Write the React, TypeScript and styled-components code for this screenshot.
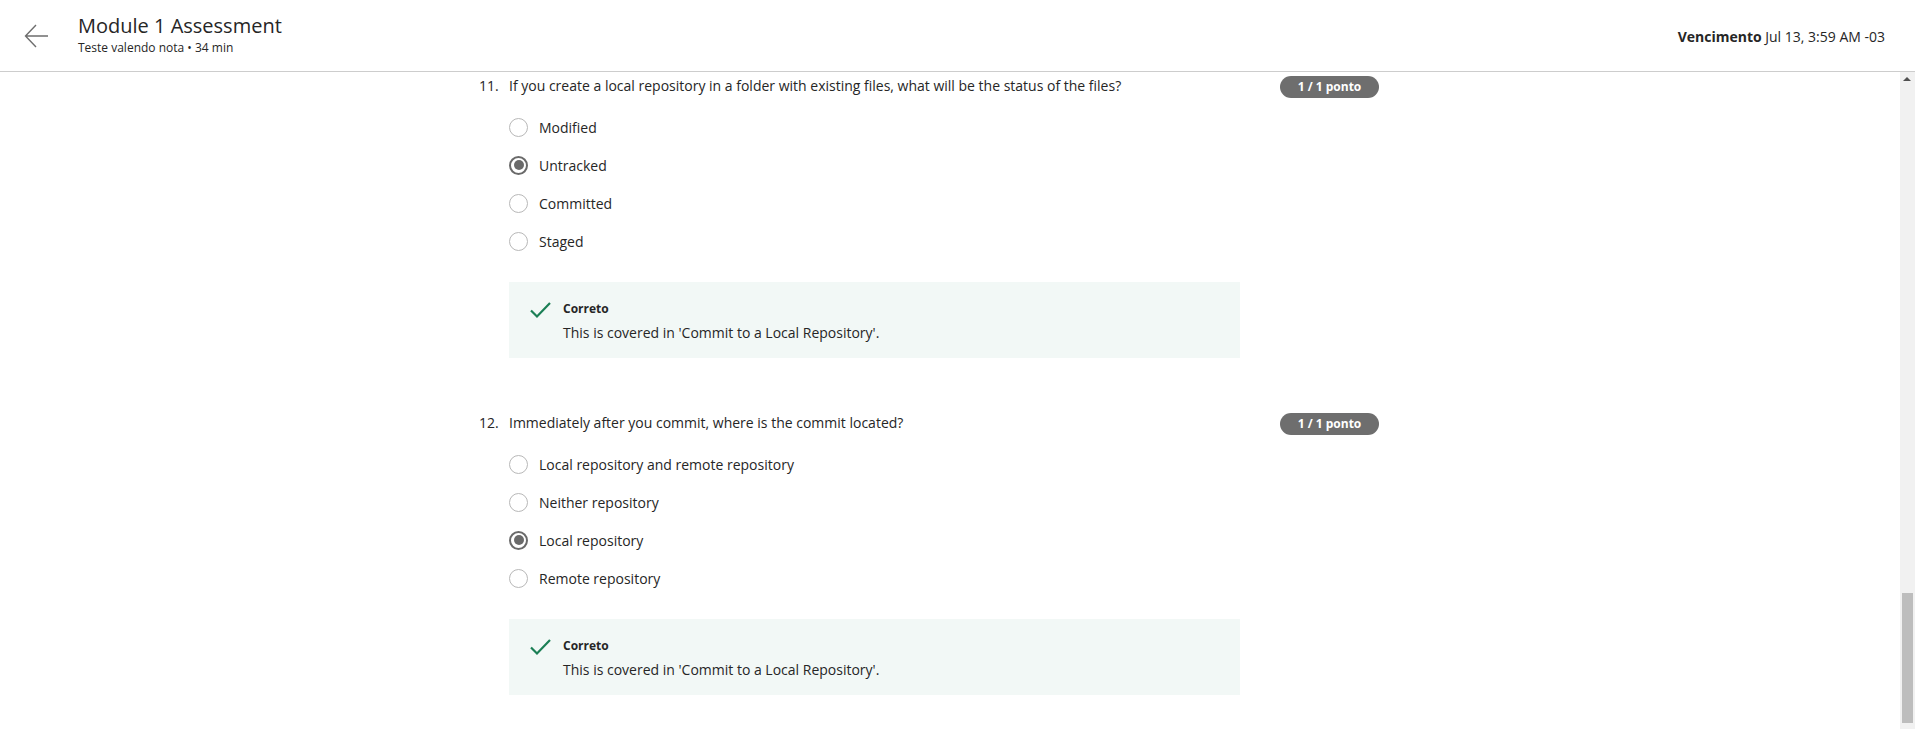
import React from "react";
import styled, { createGlobalStyle } from "styled-components";

const GlobalStyle = createGlobalStyle`
  html, body {
    margin: 0;
    padding: 0;
    background: #fff;
    overflow: hidden;
  }
  body {
    font-family: "Open Sans", "Noto Sans", sans-serif;
    color: #262626;
  }
`;

// page shell
const Page = styled.div`
  width: 1915px;
  height: 729px;
  display: flex;
  flex-direction: column;
  overflow: hidden;
`;

const Header = styled.header`
  height: 71px;
  flex-shrink: 0;
  display: flex;
  align-items: center;
  padding: 0 30px 0 24px;
  border-bottom: 1px solid #cdcdcd;
  box-sizing: content-box;
`;

const BackButton = styled.button`
  width: 26px;
  height: 26px;
  padding: 0;
  border: 0;
  background: none;
  display: flex;
  align-items: center;
  justify-content: center;
  cursor: pointer;
  margin-top: 1px;
`;

const TitleBlock = styled.div`
  margin-left: 28px;
  display: flex;
  flex-direction: column;
  margin-top: -3px;
`;

const Title = styled.h1`
  margin: 0;
  font-size: 20px;
  font-weight: 400;
  line-height: 26px;
  color: #262626;
`;

const Subtitle = styled.div`
  font-size: 12px;
  line-height: 17px;
  color: #262626;
`;

const DueDate = styled.div`
  margin-left: auto;
  font-size: 14px;
  color: #262626;
  margin-top: 1px;

  strong {
    font-weight: 700;
  }
`;

const Body = styled.div`
  flex: 1;
  display: flex;
  min-height: 0;
`;

const Content = styled.main`
  flex: 1;
  padding-left: 479px;
`;

const Column = styled.div`
  width: 900px;
`;

const Question = styled.section`
  margin-bottom: 51px;
`;

const QuestionRow = styled.div`
  display: flex;
  align-items: center;
  height: 26px;
`;

const QNumber = styled.span`
  width: 30px;
  font-size: 14px;
`;

const QText = styled.span`
  flex: 1;
  font-size: 14px;
`;

const Badge = styled.span`
  width: 99px;
  height: 22px;
  border-radius: 11px;
  background: #6e6e6e;
  color: #fff;
  font-size: 12px;
  font-weight: 700;
  display: flex;
  align-items: center;
  justify-content: center;
  margin-top: 3px;
`;

const Options = styled.ul`
  list-style: none;
  margin: 10px 0 0 30px;
  padding: 0;
`;

const Option = styled.li`
  display: flex;
  align-items: center;
  height: 38px;
  font-size: 14px;
`;

const Radio = styled.span<{ $checked?: boolean }>`
  width: 19px;
  height: 19px;
  box-sizing: border-box;
  border-radius: 50%;
  border: ${(p) => (p.$checked ? "2px solid #6a6a6a" : "1.5px solid #b8b8b8")};
  display: flex;
  align-items: center;
  justify-content: center;
  margin-right: 11px;

  &::after {
    content: "";
    display: ${(p) => (p.$checked ? "block" : "none")};
    width: 10px;
    height: 10px;
    border-radius: 50%;
    background: #6a6a6a;
  }
`;

const Feedback = styled.div`
  margin: 22px 0 0 30px;
  width: 731px;
  height: 76px;
  box-sizing: border-box;
  background: #f2f8f6;
  display: flex;
  padding: 18px 0 0 20px;
`;

const CheckIcon = styled.svg`
  width: 24px;
  height: 20px;
  flex-shrink: 0;
  margin-right: 10px;
`;

const FeedbackText = styled.div`
  display: flex;
  flex-direction: column;
`;

const FeedbackTitle = styled.div`
  font-size: 12px;
  font-weight: 700;
  line-height: 18px;
`;

const FeedbackBody = styled.div`
  font-size: 14px;
  line-height: 20px;
  margin-top: 5px;
`;

const Scrollbar = styled.div`
  width: 15px;
  background: #f1f1f1;
  position: relative;
  flex-shrink: 0;
`;

const ScrollArrow = styled.div`
  position: absolute;
  top: 5px;
  left: 3px;
  width: 0;
  height: 0;
  border-left: 4px solid transparent;
  border-right: 4px solid transparent;
  border-bottom: 4px solid #505050;
`;

const ScrollThumb = styled.div`
  position: absolute;
  left: 2px;
  right: 2px;
  top: 521px;
  height: 130px;
  background: #bdbdbd;
`;

type Q = {
  num: number;
  text: string;
  options: string[];
  selected: number;
  note: string;
};

const questions: Q[] = [
  {
    num: 11,
    text: "If you create a local repository in a folder with existing files, what will be the status of the files?",
    options: ["Modified", "Untracked", "Committed", "Staged"],
    selected: 1,
    note: "This is covered in 'Commit to a Local Repository'.",
  },
  {
    num: 12,
    text: "Immediately after you commit, where is the commit located?",
    options: [
      "Local repository and remote repository",
      "Neither repository",
      "Local repository",
      "Remote repository",
    ],
    selected: 2,
    note: "This is covered in 'Commit to a Local Repository'.",
  },
];

const App: React.FC = () => {
  return (
    <>
      <GlobalStyle />
      <Page>
        <Header>
          <BackButton aria-label="Voltar">
            <svg width="26" height="26" viewBox="0 0 26 26" fill="none">
              <path
                d="M24 13H2M12 2L1.5 13L12 24"
                stroke="#6e6e6e"
                strokeWidth="1.4"
              />
            </svg>
          </BackButton>
          <TitleBlock>
            <Title>Module 1 Assessment</Title>
            <Subtitle>Teste valendo nota • 34 min</Subtitle>
          </TitleBlock>
          <DueDate>
            <strong>Vencimento</strong> Jul 13, 3:59 AM -03
          </DueDate>
        </Header>

        <Body>
          <Content>
            <Column>
              {questions.map((q) => (
                <Question key={q.num}>
                  <QuestionRow>
                    <QNumber>{q.num}.</QNumber>
                    <QText>{q.text}</QText>
                    <Badge>1 / 1 ponto</Badge>
                  </QuestionRow>
                  <Options>
                    {q.options.map((o, i) => (
                      <Option key={o}>
                        <Radio $checked={i === q.selected} />
                        {o}
                      </Option>
                    ))}
                  </Options>
                  <Feedback>
                    <CheckIcon viewBox="0 0 24 20" fill="none">
                      <path
                        d="M2 10.5L8 16.5L21 3"
                        stroke="#1b7f55"
                        strokeWidth="2.2"
                      />
                    </CheckIcon>
                    <FeedbackText>
                      <FeedbackTitle>Correto</FeedbackTitle>
                      <FeedbackBody>{q.note}</FeedbackBody>
                    </FeedbackText>
                  </Feedback>
                </Question>
              ))}
            </Column>
          </Content>
          <Scrollbar>
            <ScrollArrow />
            <ScrollThumb />
          </Scrollbar>
        </Body>
      </Page>
    </>
  );
};

export default App;
